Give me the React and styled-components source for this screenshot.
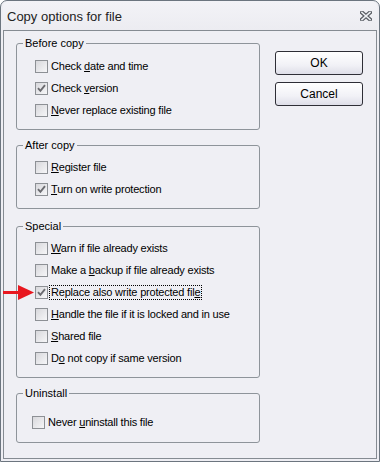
import React from 'react'
import styled, {createGlobalStyle} from 'styled-components'

const GlobalStyle = createGlobalStyle`
  html, body {
    margin: 0;
    padding: 0;
    background: #ffffff;
  }
  body {
    font-family: "Liberation Sans", Arial, sans-serif;
    font-size: 11px;
    color: #000;
  }
`

const groups = [
  {
    key: 'before',
    title: 'Before copy',
    top: 5,
    gapTop: 0,
    indent: 18,
    bottom: 8,
    items: [
      {label: ['Check ', 'd', 'ate and time'], checked: false},
      {label: ['Check ', 'v', 'ersion'], checked: true},
      {label: ['', 'N', 'ever replace existing file'], checked: false},
    ],
  },
  {
    key: 'after',
    title: 'After copy',
    top: 4,
    gapTop: 8,
    indent: 18,
    bottom: 8,
    items: [
      {label: ['', 'R', 'egister file'], checked: false},
      {label: ['', 'T', 'urn on write protection'], checked: true},
    ],
  },
  {
    key: 'special',
    title: 'Special',
    top: 4,
    gapTop: 10,
    indent: 18,
    bottom: 8,
    items: [
      {label: ['', 'W', 'arn if file already exists'], checked: false},
      {label: ['Make a ', 'b', 'ackup if file already exists'], checked: false},
      {label: ['Replace also write protected fil', 'e', ''], checked: true, focused: true, marked: true},
      {label: ['', 'H', 'andle the file if it is locked and in use'], checked: false},
      {label: ['', 'S', 'hared file'], checked: false},
      {label: ['D', 'o', ' not copy if same version'], checked: false},
    ],
  },
  {
    key: 'uninstall',
    title: 'Uninstall',
    top: 11,
    gapTop: 8,
    indent: 15,
    bottom: 9,
    items: [{label: ['Never ', 'u', 'ninstall this file'], checked: false}],
  },
]

const CloseIcon = () => (
  <svg width="12" height="10" viewBox="0 0 12 10">
    <path d="M2 1.5 L10 8.5 M10 1.5 L2 8.5" stroke="#5b5f66" strokeWidth="4" strokeLinecap="square" fill="none" />
    <path d="M2 1.5 L10 8.5 M10 1.5 L2 8.5" stroke="#eef0f4" strokeWidth="1.6" strokeLinecap="square" fill="none" />
  </svg>
)

const CheckMark = () => (
  <svg width="9" height="9" viewBox="0 0 9 9">
    <path d="M1 4.2 L3.4 6.8 L8 1.2" stroke="#6b6b70" strokeWidth="1.9" fill="none" />
  </svg>
)

const Arrow = () => (
  <svg width="32" height="15" viewBox="0 0 32 15">
    <rect x="0" y="6" width="16" height="3" fill="#e8171f" />
    <polygon points="15,0 31,7.5 15,15" fill="#e8171f" />
  </svg>
)

function App() {
  return (
    <>
      <GlobalStyle />
      <Window>
        <TitleBar>
          <Title>Copy options for file</Title>
          <CloseBox>
            <CloseIcon />
          </CloseBox>
        </TitleBar>
        <Client>
          <Groups>
            {groups.map(group => (
              <Group key={group.key} $gapTop={group.gapTop}>
                <Legend>{group.title}</Legend>
                <Rows $top={group.top} $indent={group.indent} $bottom={group.bottom}>
                  {group.items.map((item, i) => (
                    <Row key={i}>
                      {item.marked && (
                        <Marker>
                          <Arrow />
                        </Marker>
                      )}
                      <Box>{item.checked && <CheckMark />}</Box>
                      <Label $focused={item.focused}>
                        {item.label[0]}
                        <u>{item.label[1]}</u>
                        {item.label[2]}
                      </Label>
                    </Row>
                  ))}
                </Rows>
              </Group>
            ))}
          </Groups>
          <Buttons>
            <Button>OK</Button>
            <Button>Cancel</Button>
          </Buttons>
        </Client>
      </Window>
    </>
  )
}

export default App

const Window = styled.div`
  position: relative;
  box-sizing: border-box;
  width: 380px;
  height: 462px;
  border: 1px solid #6c757f;
  border-radius: 7px 7px 0 0;
  background: #eeeef3;
  padding: 0 2px 2px 2px;
  display: flex;
  flex-direction: column;
`

const TitleBar = styled.div`
  height: 29px;
  display: flex;
  align-items: center;
  justify-content: space-between;
  padding: 0 5px 0 4px;
  background: linear-gradient(#f3f3f7, #ececf1);
  border-radius: 6px 6px 0 0;
`

const Title = styled.div`
  font-size: 13px;
  color: #222;
  padding-top: 2px;
`

const CloseBox = styled.div`
  display: flex;
  align-items: center;
  padding-top: 1px;
`

const Client = styled.div`
  flex: 1;
  display: flex;
  gap: 15px;
  border: 1px solid #858b92;
  padding: 5px 12px 0 12px;
  background: #efeff4;
`

const Groups = styled.div`
  width: 244px;
  display: flex;
  flex-direction: column;
`

const Group = styled.fieldset`
  margin: ${p => p.$gapTop}px 0 0 0;
  padding: 0;
  border: 1px solid #8e949a;
  border-radius: 3px;
  min-width: 0;
`

const Legend = styled.legend`
  margin-left: 6px;
  padding: 0 2px;
  line-height: 14px;
  font-size: 11px;
  color: #000;
`

const Rows = styled.div`
  padding: ${p => p.$top}px 0 ${p => p.$bottom}px ${p => p.$indent}px;
  display: flex;
  flex-direction: column;
`

const Row = styled.div`
  position: relative;
  height: 22px;
  display: flex;
  align-items: center;
  white-space: nowrap;
`

const Marker = styled.div`
  position: absolute;
  left: -32px;
  top: 4px;
  display: flex;
`

const Box = styled.span`
  box-sizing: border-box;
  width: 13px;
  height: 13px;
  margin-right: 1px;
  border: 1px solid #8d9095;
  background: linear-gradient(135deg, #d8d8dc, #f6f6f8);
  display: flex;
  align-items: center;
  justify-content: center;
  flex: none;
`

const Label = styled.span`
  border: 1px dotted ${p => (p.$focused ? '#000' : 'transparent')};
  padding: 0 1px;
  line-height: 13px;
  font-size: 11px;
  letter-spacing: -0.2px;
`

const Buttons = styled.div`
  display: flex;
  flex-direction: column;
  gap: 7px;
  padding-top: 15px;
`

const Button = styled.button`
  box-sizing: border-box;
  width: 88px;
  height: 24px;
  border: 1px solid #2e2e36;
  border-radius: 3px;
  background: linear-gradient(#ffffff, #f1f1f6 60%, #dedee8);
  font-family: "Liberation Sans", Arial, sans-serif;
  font-size: 12px;
  color: #000;
  padding: 0;
`
